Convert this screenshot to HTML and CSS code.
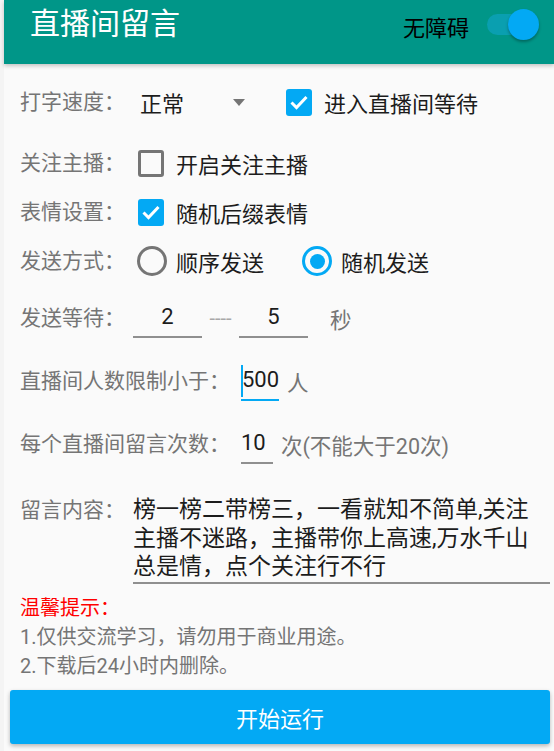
FILE: index.html
```html
<!DOCTYPE html>
<html lang="zh-CN">
<head>
<meta charset="utf-8">
<title>直播间留言</title>
<link rel="stylesheet" href="styles.css">
</head>
<body>
<div class="app">
  <header class="topbar">
    <div class="topbar-row">
      <h1 class="title">直播间留言</h1>
      <div class="a11y">
        <span class="a11y-text">无障碍</span>
        <span class="switch"><span class="track"></span><span class="thumb"></span></span>
      </div>
    </div>
  </header>

  <main class="form">
    <div class="row r1">
      <span class="label">打字速度：</span>
      <div class="spinner"><span class="value">正常</span><span class="caret"></span></div>
      <div class="check check-wait">
        <span class="box checked"><svg viewBox="0 0 26 26" width="26" height="26"><path d="M5.5 13.5l5 5l10-10.5" fill="none" stroke="#fff" stroke-width="3"/></svg></span>
        <span class="opt">进入直播间等待</span>
      </div>
    </div>

    <div class="row r2">
      <span class="label">关注主播：</span>
      <div class="check">
        <span class="box"></span>
        <span class="opt">开启关注主播</span>
      </div>
    </div>

    <div class="row r3">
      <span class="label">表情设置：</span>
      <div class="check">
        <span class="box checked"><svg viewBox="0 0 26 26" width="26" height="26"><path d="M5.5 13.5l5 5l10-10.5" fill="none" stroke="#fff" stroke-width="3"/></svg></span>
        <span class="opt">随机后缀表情</span>
      </div>
    </div>

    <div class="row r4">
      <span class="label">发送方式：</span>
      <div class="radio">
        <span class="dot"></span>
        <span class="opt">顺序发送</span>
      </div>
      <div class="radio radio-2">
        <span class="dot on"></span>
        <span class="opt">随机发送</span>
      </div>
    </div>

    <div class="row r5">
      <span class="label">发送等待：</span>
      <span class="field field-wait field-min">2</span>
      <span class="dashes">----</span>
      <span class="field field-wait">5</span>
      <span class="unit unit-sec">秒</span>
    </div>

    <div class="row r6">
      <span class="label">直播间人数限制小于：</span>
      <span class="field field-focus"><span class="cursor"></span>500</span>
      <span class="unit unit-person">人</span>
    </div>

    <div class="row r7">
      <span class="label">每个直播间留言次数：</span>
      <span class="field field-count">10</span>
      <span class="unit unit-times">次(不能大于20次)</span>
    </div>

    <div class="row r8">
      <span class="label">留言内容：</span>
      <div class="textarea">
        <span class="line">榜一榜二带榜三，一看就知不简单,关注</span>
        <span class="line">主播不迷路，主播带你上高速,万水千山</span>
        <span class="line">总是情，点个关注行不行</span>
      </div>
    </div>

    <div class="tips">
      <p class="tips-title">温馨提示：</p>
      <p class="tip">1.仅供交流学习，请勿用于商业用途。</p>
      <p class="tip">2.下载后24小时内删除。</p>
    </div>

    <button class="run" type="button">开始运行</button>
  </main>
</div>
</body>
</html>
```

FILE: styles.css
```css
* { box-sizing: border-box; }

html, body {
  margin: 0;
  padding: 0;
}

body {
  width: 554px;
  height: 751px;
  overflow: hidden;
  background: #f4f4f4;
  font-family: Roboto, "Noto Sans CJK SC", "Noto Sans", sans-serif;
}

.app {
  margin-left: 4px;
  height: 751px;
  background: #fafafa;
  display: flex;
  flex-direction: column;
}

/* ---------- top bar ---------- */
.topbar {
  height: 64px;
  background: #009688;
  box-shadow: 0 2px 4px rgba(0, 0, 0, 0.22);
  position: relative;
  z-index: 1;
  flex: none;
}

.topbar-row {
  height: 48px;
  display: flex;
  align-items: center;
  padding-left: 26px;
  padding-right: 15px;
}

.title {
  margin: 0;
  font-weight: 400;
  font-size: 30px;
  color: #fff;
  line-height: 1;
  flex: 1;
}

.a11y {
  display: flex;
  align-items: center;
}

.a11y-text {
  font-size: 22px;
  color: #000;
  margin-top: 4px;
}

.switch {
  position: relative;
  width: 52px;
  height: 32px;
  margin-left: 18px;
  margin-top: 2px;
}

.track {
  position: absolute;
  left: 0;
  top: 5px;
  width: 50px;
  height: 21px;
  border-radius: 11px;
  background: #0a9fb0;
}

.thumb {
  position: absolute;
  right: 0;
  top: 0;
  width: 31px;
  height: 31px;
  border-radius: 50%;
  background: #03a9f4;
  box-shadow: 0 2px 3px rgba(0, 0, 0, 0.3);
}

/* ---------- form ---------- */
.form {
  flex: 1;
  display: flex;
  flex-direction: column;
  padding: 18px 0 0 16px;
}

.row {
  display: flex;
  align-items: center;
  height: 40px;
}

.r2 { margin-top: 21px; }
.r3 { margin-top: 9px; }
.r4 { margin-top: 9px; }
.r5 { margin-top: 17px; }
.r6 { margin-top: 23px; }
.r7 { margin-top: 23px; }
.r8 {
  margin-top: 32px;
  height: auto;
  align-items: flex-start;
}

.label {
  font-size: 21px;
  color: #757575;
  white-space: nowrap;
  line-height: 29px;
}

.opt {
  font-size: 22px;
  color: #1c1c1c;
  white-space: nowrap;
}

/* spinner */
.spinner {
  display: flex;
  align-items: center;
  margin-left: 15px;
  width: 105px;
}

.value {
  font-size: 22px;
  color: #1c1c1c;
}

.caret {
  margin-left: auto;
  width: 0;
  height: 0;
  border-left: 6.5px solid transparent;
  border-right: 6.5px solid transparent;
  border-top: 7px solid #757575;
}

/* checkbox */
.check {
  display: flex;
  align-items: center;
  margin-left: 13px;
}

.check-wait { margin-left: 41px; }

.box {
  width: 26px;
  height: 27px;
  border: 3px solid #757575;
  border-radius: 3px;
  display: flex;
  align-items: center;
  justify-content: center;
  margin-right: 12px;
}

.box.checked {
  border: none;
  background: #03a9f4;
}

/* radio */
.radio {
  display: flex;
  align-items: center;
  margin-left: 12px;
}

.radio-2 { margin-left: 38px; }

.dot {
  width: 30px;
  height: 30px;
  border: 3px solid #757575;
  border-radius: 50%;
  margin-right: 9px;
  display: flex;
  align-items: center;
  justify-content: center;
}

.dot.on { border-color: #03a9f4; }

.dot.on::after {
  content: "";
  width: 15px;
  height: 15px;
  border-radius: 50%;
  background: #03a9f4;
}

/* edit fields */
.field {
  height: 40px;
  display: flex;
  align-items: center;
  font-size: 22px;
  color: #1c1c1c;
  border-bottom: 2px solid #8f8f8f;
  padding-bottom: 1px;
}

.field-wait {
  width: 69px;
  justify-content: center;
}

.field-min { margin-left: 8px; }

.dashes {
  font-size: 20px;
  color: #a8a8a8;
  width: 37px;
  text-align: center;
}

.unit {
  font-size: 21.5px;
  color: #757575;
  white-space: nowrap;
}

.unit-sec { margin-left: 22px; }

.field-focus {
  width: 38px;
  margin-left: 11px;
  border-bottom-color: #03a9f4;
  position: relative;
  padding-left: 1px;
}

.cursor {
  position: absolute;
  left: 0;
  top: 4px;
  width: 2px;
  height: 32px;
  background: #03a9f4;
}

.unit-person { margin-left: 8px; }

.field-count {
  width: 32px;
  margin-left: 11px;
}

.unit-times { margin-left: 8px; }

.textarea {
  margin-left: 8px;
  width: 417px;
  border-bottom: 2px solid #8f8f8f;
  display: flex;
  flex-direction: column;
  padding-bottom: 0;
}

.line {
  display: block;
  font-size: 23px;
  line-height: 28.5px;
  color: #1c1c1c;
  white-space: nowrap;
}

/* tips */
.tips {
  margin-top: 10px;
}

.tips p {
  margin: 0;
  line-height: 29px;
  font-size: 20px;
  white-space: nowrap;
}

.tips-title { color: #ff0000; }

.tip { color: #757575; }

/* run button */
.run {
  margin: 9px 0 0 -10px;
  width: 540px;
  height: 54px;
  border: none;
  border-radius: 3px;
  background: #03a9f4;
  color: #fff;
  font-family: Roboto, "Noto Sans CJK SC", sans-serif;
  font-size: 22px;
  box-shadow: 0 2px 4px rgba(0, 0, 0, 0.28);
  padding: 0;
}
```
